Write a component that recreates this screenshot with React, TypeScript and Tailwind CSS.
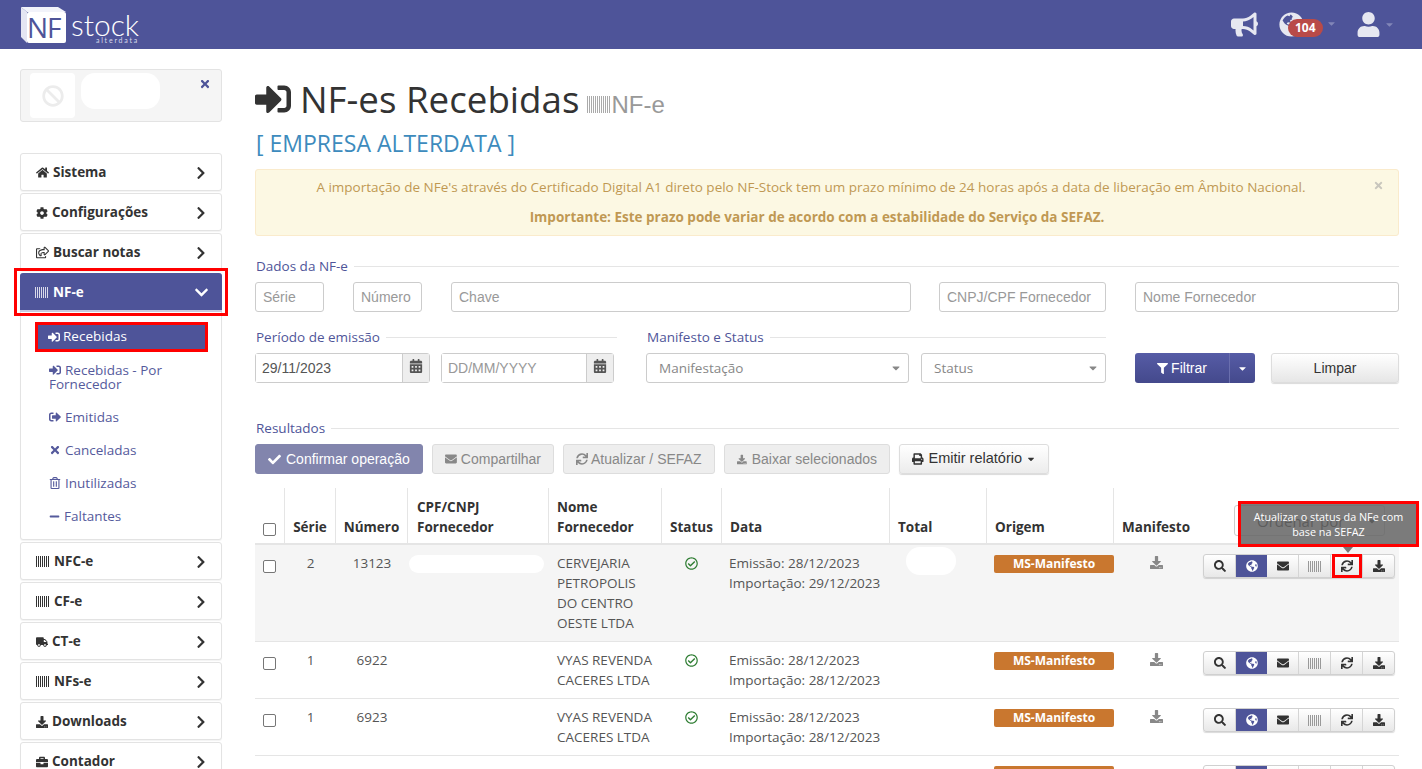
import type { ReactNode } from 'react'
import {
  FaBan, FaBriefcase, FaBullhorn, FaCalendarAlt, FaCaretDown, FaCheck, FaChevronDown, FaChevronRight,
  FaCog, FaDownload, FaEnvelope, FaFilter, FaGlobeAmericas, FaHome, FaMinus,
  FaPrint, FaRegCheckCircle, FaRegShareSquare, FaRegTrashAlt, FaSearch, FaSignInAlt, FaSignOutAlt, FaSync, FaTimes, FaTruck, FaUser,
} from 'react-icons/fa'

// listras do "codigo de barras" usado como icone da NF-e: uma barra a cada 2px
function Barcode({ w = 14, h = 11, className = '' }: { w?: number; h?: number; className?: string }) {
  const bars = Array.from({ length: Math.ceil(w / 2) }, (_, i) => i * 2)
  return (
    <svg width={w} height={h} viewBox={`0 0 ${w} ${h}`} className={className} fill="currentColor" shapeRendering="crispEdges">
      {bars.map((x) => (
        <rect key={x} x={x} y="0" width="1" height={h} />
      ))}
    </svg>
  )
}

function MenuItem({ icon, label }: { icon: ReactNode; label: string }) {
  return (
    <div className="flex h-[38px] items-center justify-between rounded-[3px] border border-[#e3e3e3] bg-white pl-[15px] pr-[13px] pt-px text-[13.5px] font-bold text-[#333] shadow-[0_1px_1px_rgba(0,0,0,0.05)]">
      <span className="flex items-center gap-[4px]">
        {icon}
        {label}
      </span>
      <FaChevronRight className="text-[14px] text-[#333]" />
    </div>
  )
}

function SubItem({ icon, children, className = '' }: { icon: ReactNode; children: ReactNode; className?: string }) {
  return (
    <div className={`pl-[13px] text-[13.5px] leading-[14px] text-[#555a9c] ${className}`}>
      <span className="mr-[4px] inline-block align-[-1px]">{icon}</span>
      {children}
    </div>
  )
}

function Legend({ children, className = '' }: { children: ReactNode; className?: string }) {
  return (
    <div className={`flex items-center gap-[6px] pl-px text-[13.5px] leading-[20px] text-[#4f5599] ${className}`}>
      <span className="whitespace-nowrap">{children}</span>
      <span className="h-px flex-1 bg-[#e5e5e5]" />
    </div>
  )
}

function TextInput({ placeholder, className = '' }: { placeholder: string; className?: string }) {
  return (
    <div className={`flex h-[30px] items-center rounded-[3px] border border-[#ccc] bg-white px-[7px] font-['Liberation_Sans',sans-serif] text-[14px] text-[#999] ${className}`}>
      {placeholder}
    </div>
  )
}

function DateInput({ value, muted, className = '' }: { value: string; muted?: boolean; className?: string }) {
  return (
    <div className={`flex h-[30px] rounded-[3px] border border-[#ccc] font-['Liberation_Sans',sans-serif] text-[14px] ${className}`}>
      <div className={`flex flex-1 items-center bg-white px-[6px] ${muted ? 'text-[#999]' : 'text-[#555]'}`}>{value}</div>
      <div className="flex w-[27px] items-start justify-center border-l border-[#ccc] bg-[#eee] pt-[5px] text-[14px] text-[#555]">
        <FaCalendarAlt />
      </div>
    </div>
  )
}

function SelectBox({ label, className = '' }: { label: string; className?: string }) {
  return (
    <div className={`flex h-[30px] items-center justify-between rounded-[3px] border border-[#ccc] bg-white pl-[12px] pr-[6px] text-[13.5px] text-[#888] ${className}`}>
      {label}
      <FaCaretDown className="text-[12px] text-[#888]" />
    </div>
  )
}

function ToolButton({ icon, label, className = '' }: { icon: ReactNode; label: ReactNode; className?: string }) {
  return (
    <div className={`flex h-[30px] items-center whitespace-nowrap rounded-[3px] border px-[12px] font-['Liberation_Sans',sans-serif] text-[14px] ${className}`}>
      {icon}
      {label}
    </div>
  )
}

function Actions() {
  const btn = 'flex h-full flex-1 items-center justify-center border-r border-[#d5d5d5] text-[12px] text-[#333]'
  return (
    <div className="flex h-[24px] w-[192px] overflow-hidden rounded-[3px] border border-[#d0d0d0] bg-gradient-to-b from-white to-[#e8e8e8] shadow-[0_1px_1px_rgba(0,0,0,0.15)]">
      <div className={btn}><FaSearch /></div>
      <div className="flex h-full flex-1 items-center justify-center bg-[#4e5499] text-[12px] text-white"><FaGlobeAmericas /></div>
      <div className={btn}><FaEnvelope /></div>
      <div className={btn}><Barcode w={13} h={11} className="text-[#999]" /></div>
      <div className={btn}><FaSync /></div>
      <div className="flex h-full flex-1 items-center justify-center text-[12px] text-[#333]"><FaDownload /></div>
    </div>
  )
}

function Blot({ className }: { className: string }) {
  return <span className={`absolute rounded-full bg-white ${className}`} />
}

const cols = 'grid grid-cols-[30px_51px_72px_141px_113px_60px_168px_97px_127px_89px_1fr]'

interface Row {
  serie: string
  numero: string
  nome: string[]
  emissao: string
  importacao: string
  height: string
  bg: string
  blotCpf?: string
  blotTotal?: string
}

const rows: Row[] = [
  { serie: '2', numero: '13123', nome: ['CERVEJARIA', 'PETROPOLIS', 'DO CENTRO', 'OESTE LTDA'], emissao: '28/12/2023', importacao: '29/12/2023', height: 'h-[97px]', bg: 'bg-[#f5f5f5]', blotCpf: 'left-[1px] top-[10px] h-[18px] w-[135px]', blotTotal: 'left-[16px] top-[2px] h-[28px] w-[50px]' },
  { serie: '1', numero: '6922', nome: ['VYAS REVENDA', 'CACERES LTDA'], emissao: '28/12/2023', importacao: '28/12/2023', height: 'h-[57px]', bg: 'bg-white' },
  { serie: '1', numero: '6923', nome: ['VYAS REVENDA', 'CACERES LTDA'], emissao: '28/12/2023', importacao: '28/12/2023', height: 'h-[57px]', bg: 'bg-white', blotCpf: 'left-[1px] top-[12px] h-[14px] w-[120px]', blotTotal: 'left-[12px] top-[6px] h-[24px] w-[55px]' },
]

const checkbox = 'h-[13px] w-[13px] rounded-[2px] border border-[#767676] bg-white'

export default function App() {
  return (
    <div className="relative h-[769px] w-[1422px] overflow-hidden bg-white font-['Open_Sans',sans-serif] text-[#555]">
      {/* Topo */}
      <header className="flex h-[49px] items-center justify-between bg-[#4e5499] pl-[21px] pr-[27px] text-white">
        <div className="flex items-center">
          <div className="relative h-[36px] w-[45px]">
            <svg viewBox="0 0 45 36" className="absolute inset-0 h-full w-full">
              <polygon points="0,0 37,0 45,5 6,5" fill="#f2f3fa" />
              <polygon points="0,0 6,5 6,36 0,30" fill="#e4e5f2" />
              <rect x="6" y="5" width="39" height="31" rx="2" fill="#fff" />
            </svg>
            <span className="absolute inset-x-[6px] top-[5px] text-center text-[28px] font-normal leading-[31px] tracking-[-1px] text-[#4e5499]">NF</span>
          </div>
          <div className="ml-[5px] mt-[6px] flex flex-col items-end">
            <span className="font-['Lato',sans-serif] text-[30px] font-light leading-[24px]">stock</span>
            <span className="mt-[1px] font-['Lato',sans-serif] text-[7px] leading-[7px] tracking-[1.8px] text-[#d8daea]">alterdata</span>
          </div>
        </div>
        <div className="flex items-center">
          <FaBullhorn className="text-[27px] text-[#e6e7f1]" />
          <div className="relative ml-[21px] flex w-[60px] items-center">
            <FaGlobeAmericas className="text-[25px] text-[#e6e7f1]" />
            <span className="absolute left-[9px] top-[7px] rounded-full bg-[#b94a48] px-[7px] text-[12px] font-bold leading-[18px]">104</span>
            <FaCaretDown className="absolute left-[47px] top-[6px] text-[11px] text-[#8286b8]" />
          </div>
          <FaUser className="ml-[17px] text-[25px] text-[#e6e7f1]" />
          <FaCaretDown className="ml-[3px] text-[11px] text-[#8286b8]" />
        </div>
      </header>

      <div className="flex">
        {/* Menu lateral */}
        <aside className="ml-[20px] w-[202px] shrink-0 pt-[20px]">
          <div className="relative flex h-[53px] rounded-[3px] border border-[#e3e3e3] bg-[#f5f5f5] pl-[9px] pt-[3px]">
            <div className="flex h-[45px] w-[45px] items-center justify-center rounded-[4px] bg-white text-[22px] text-[#ececec]">
              <FaBan />
            </div>
            <span className="ml-[6px] h-[36px] w-[79px] rounded-[14px] bg-white" />
            <FaTimes className="absolute right-[10px] top-[8px] text-[12px] text-[#4e5499]" />
          </div>

          <nav className="mt-[31px] flex flex-col gap-[2px]">
            <MenuItem icon={<FaHome className="text-[13px]" />} label="Sistema" />
            <MenuItem icon={<FaCog className="text-[12px]" />} label="Configurações" />
            <MenuItem icon={<FaRegShareSquare className="text-[13px]" />} label="Buscar notas" />

            <div className="rounded-[3px] border border-[#e3e3e3] bg-white pb-[16px] shadow-[0_1px_1px_rgba(0,0,0,0.05)]">
              <div className="-m-px flex h-[39px] items-center justify-between rounded-t-[3px] border-b-2 border-[#c8cae0] bg-[#4e5499] pl-[15px] pr-[13px] pt-px text-[13.5px] font-bold text-white">
                <span className="flex items-center gap-[4px]">
                  <Barcode className="text-[#d9daea]" />
                  NF-e
                </span>
                <FaChevronDown className="text-[15px]" />
              </div>
              <div className="ml-[15px] mr-[14px] mt-[12px] flex flex-col">
                <div className="flex h-[26px] items-center bg-[#4e5499] pl-[12px] pt-px text-[13.5px] text-white">
                  <FaSignInAlt className="mr-[3px] text-[12px]" />
                  Recebidas
                </div>
                <SubItem icon={<FaSignInAlt className="text-[12px]" />} className="mt-[14px]">
                  Recebidas - Por Fornecedor
                </SubItem>
                <SubItem icon={<FaSignOutAlt className="text-[12px]" />} className="mt-[19px]">
                  Emitidas
                </SubItem>
                <SubItem icon={<FaTimes className="text-[12px]" />} className="mt-[19px]">
                  Canceladas
                </SubItem>
                <SubItem icon={<FaRegTrashAlt className="text-[12px]" />} className="mt-[19px]">
                  Inutilizadas
                </SubItem>
                <SubItem icon={<FaMinus className="text-[11px]" />} className="mt-[19px]">
                  Faltantes
                </SubItem>
              </div>
            </div>

            <MenuItem icon={<Barcode />} label="NFC-e" />
            <MenuItem icon={<Barcode />} label="CF-e" />
            <MenuItem icon={<FaTruck className="text-[12px]" />} label="CT-e" />
            <MenuItem icon={<Barcode />} label="NFs-e" />
            <MenuItem icon={<FaDownload className="text-[12px]" />} label="Downloads" />
            <MenuItem icon={<FaBriefcase className="text-[12px]" />} label="Contador" />
          </nav>
        </aside>

        {/* Conteudo */}
        <main className="ml-[33px] w-[1144px] shrink-0">
          <div className="mt-[23px] flex items-baseline text-[#333]">
            <FaSignInAlt className="mr-[9px] self-center text-[36px]" />
            <h1 className="text-[36.7px] leading-[54px]">NF-es Recebidas</h1>
            <span className="ml-[8px] flex items-center font-['Liberation_Sans',sans-serif] text-[24px] text-[#999]">
              <Barcode w={24} h={17} className="text-[#aaa]" />
              NF-e
            </span>
          </div>
          <div className="pl-px text-[23px] leading-[34px] text-[#3d8bbd]">[ EMPRESA ALTERDATA ]</div>

          <div className="relative mt-[9px] h-[67px] rounded-[3px] border border-[#faebcc] bg-[#fcf8e3] pt-[7px] text-center text-[13.5px] leading-[20px] text-[#c09853]">
            <p className="pr-[32px]">A importação de NFe's através do Certificado Digital A1 direto pelo NF-Stock tem um prazo mínimo de 24 horas após a data de liberação em Âmbito Nacional.</p>
            <p className="mt-[10px] pr-[20px] font-bold">Importante: Este prazo pode variar de acordo com a estabilidade do Serviço da SEFAZ.</p>
            <FaTimes className="absolute right-[14px] top-[10px] text-[11px] text-[#c8c6bd]" />
          </div>

          <Legend className="mt-[20px]">Dados da NF-e</Legend>
          <div className="mt-[6px] flex">
            <TextInput placeholder="Série" className="w-[69px]" />
            <TextInput placeholder="Número" className="ml-[29px] w-[69px]" />
            <TextInput placeholder="Chave" className="ml-[29px] w-[460px]" />
            <TextInput placeholder="CNPJ/CPF Fornecedor" className="ml-[28px] w-[167px]" />
            <TextInput placeholder="Nome Fornecedor" className="ml-[29px] w-[264px]" />
          </div>

          <div className="mt-[15px] flex">
            <Legend className="w-[362px]">Período de emissão</Legend>
            <Legend className="ml-[29px] w-[460px]">Manifesto e Status</Legend>
          </div>
          <div className="mt-[6px] flex">
            <DateInput value="29/11/2023" className="w-[175px]" />
            <DateInput value="DD/MM/YYYY" muted className="ml-[11px] w-[173px]" />
            <SelectBox label="Manifestação" className="ml-[32px] w-[263px]" />
            <SelectBox label="Status" className="ml-[12px] w-[185px]" />
            <div className="ml-[29px] flex h-[30px] w-[120px] overflow-hidden rounded-[3px] bg-gradient-to-b from-[#565ca6] to-[#44498c] font-['Liberation_Sans',sans-serif] text-[14px] text-white">
              <div className="flex flex-1 items-center justify-center gap-[3px] border-r border-[#6a6fae]">
                <FaFilter className="text-[11px]" />
                Filtrar
              </div>
              <div className="flex w-[25px] items-center justify-center">
                <FaCaretDown className="text-[11px]" />
              </div>
            </div>
            <div className="ml-[16px] flex h-[30px] w-[128px] items-center justify-center rounded-[3px] border border-[#ddd] bg-gradient-to-b from-white to-[#e6e6e6] font-['Liberation_Sans',sans-serif] text-[14px] text-[#333] shadow-[0_1px_1px_rgba(0,0,0,0.15)]">
              Limpar
            </div>
          </div>

          <Legend className="mt-[35px]">Resultados</Legend>
          <div className="mt-[6px] flex gap-[9px]">
            <ToolButton icon={<FaCheck className="mr-[5px] text-[13px]" />} label="Confirmar operação" className="w-[168px] border-[#8285ad] bg-[#8285ad] text-white" />
            <ToolButton icon={<FaEnvelope className="mr-[4px] text-[14px]" />} label="Compartilhar" className="w-[122px] border-[#ddd] bg-[#eee] text-[#888]" />
            <ToolButton icon={<FaSync className="mr-[3px] text-[12px]" />} label="Atualizar / SEFAZ" className="w-[152px] border-[#ddd] bg-[#eee] text-[#888]" />
            <ToolButton icon={<FaDownload className="mr-[5px] text-[13px]" />} label="Baixar selecionados" className="w-[166px] border-[#ddd] bg-[#eee] text-[#888]" />
            <ToolButton
              icon={<FaPrint className="mr-[5px] text-[12px]" />}
              label={<span className="flex items-center gap-[4px] text-[14.5px]">Emitir relatório <FaCaretDown className="text-[10px]" /></span>}
              className="w-[150px] border-[#ddd] bg-gradient-to-b from-white to-[#ececec] text-[#333] shadow-[0_1px_1px_rgba(0,0,0,0.15)]"
            />
          </div>

          {/* Tabela */}
          <div className="mt-[14px] text-[13.5px] leading-[20px]">
            <div className={`${cols} h-[57px] border-b-2 border-[#e5e5e5] font-bold text-[#333]`}>
              <div className="flex items-end border-r border-[#e5e5e5] pb-[7px] pl-[8px]"><span className={checkbox} /></div>
              <div className="flex items-end justify-center border-r border-[#e5e5e5] pb-[6px]">Série</div>
              <div className="flex items-end justify-center border-r border-[#e5e5e5] pb-[6px]">Número</div>
              <div className="flex items-end border-r border-[#e5e5e5] pb-[6px] pl-[9px]">CPF/CNPJ<br />Fornecedor</div>
              <div className="flex items-end border-r border-[#e5e5e5] pb-[6px] pl-[8px]">Nome<br />Fornecedor</div>
              <div className="flex items-end justify-center border-r border-[#e5e5e5] pb-[6px]">Status</div>
              <div className="flex items-end border-r border-[#e5e5e5] pb-[6px] pl-[8px]">Data</div>
              <div className="flex items-end border-r border-[#e5e5e5] pb-[6px] pl-[8px]">Total</div>
              <div className="flex items-end border-r border-[#e5e5e5] pb-[6px] pl-[8px]">Origem</div>
              <div className="flex items-end pb-[6px] pl-[8px]">Manifesto</div>
              <div className="pl-[31px] pt-[17px]">
                <div className="flex h-[31px] w-[151px] items-center justify-between rounded-[3px] border border-[#ccc] pl-[22px] pr-[6px] text-[15px] font-normal text-[#333]">
                  Ordenar por
                  <FaCaretDown className="text-[12px]" />
                </div>
              </div>
            </div>

            {rows.map((row, i) => (
              <div key={i} className={`${cols} ${row.height} ${row.bg} border-b border-[#e5e5e5]`}>
                <div className="pl-[8px] pt-[15px]"><div className={checkbox} /></div>
                <div className="pt-[8px] text-center">{row.serie}</div>
                <div className="pt-[8px] text-center">{row.numero}</div>
                <div className="relative">{row.blotCpf && <Blot className={row.blotCpf} />}</div>
                <div className="pl-[8px] pt-[8px]">
                  {row.nome.map((n) => (
                    <div key={n} className="whitespace-nowrap">{n}</div>
                  ))}
                </div>
                <div className="flex justify-center pr-[2px] pt-[12px] text-[13px] text-[#2e7d32]"><FaRegCheckCircle /></div>
                <div className="pl-[7px] pt-[8px]">
                  <div>Emissão: {row.emissao}</div>
                  <div>Importação: {row.importacao}</div>
                </div>
                <div className="relative">{row.blotTotal && <Blot className={row.blotTotal} />}</div>
                <div className="pl-[7px] pt-[10px]">
                  <div className="h-[18px] w-[120px] rounded-[2px] bg-[#c9772f] text-center text-[12px] font-bold leading-[18px] text-white">MS-Manifesto</div>
                </div>
                <div className="flex justify-center pr-[4px] pt-[11px] text-[13px] text-[#888]"><FaDownload /></div>
                <div className="pt-[9px]"><Actions /></div>
              </div>
            ))}

            <div className={`${cols} h-[30px]`}>
              <div className="col-span-6" />
              <div className="pl-[7px] pt-[10px]">Emissão: 28/12/2023</div>
              <div />
              <div className="pl-[7px] pt-[10px]"><div className="h-[18px] w-[120px] rounded-[2px] bg-[#c9772f]" /></div>
              <div />
              <div className="pt-[9px]"><Actions /></div>
            </div>
          </div>
        </main>
      </div>

      {/* Tooltip e destaques vermelhos sobre a pagina */}
      <div className="absolute left-[1241px] top-[504px] z-10 flex h-[40px] w-[175px] items-center justify-center bg-[rgba(100,100,100,0.85)] px-[8px] text-center text-[10.8px] leading-[15px] text-white outline outline-[3px] outline-[#f00]">
        Atualizar o status da NFe com base na SEFAZ
      </div>
      <span className="absolute left-[1343px] top-[547px] z-10 h-0 w-0 border-x-[5px] border-t-[6px] border-x-transparent border-t-[#777]" />
      <span className="absolute left-[1335px] top-[557px] z-10 h-[18px] w-[24px] outline outline-[3px] outline-[#f00]" />
      <span className="absolute left-[17px] top-[271px] z-10 h-[42px] w-[208px] outline outline-[3px] outline-[#f00]" />
      <span className="absolute left-[38px] top-[325px] z-10 h-[24px] w-[167px] outline outline-[3px] outline-[#f00]" />
    </div>
  )
}
